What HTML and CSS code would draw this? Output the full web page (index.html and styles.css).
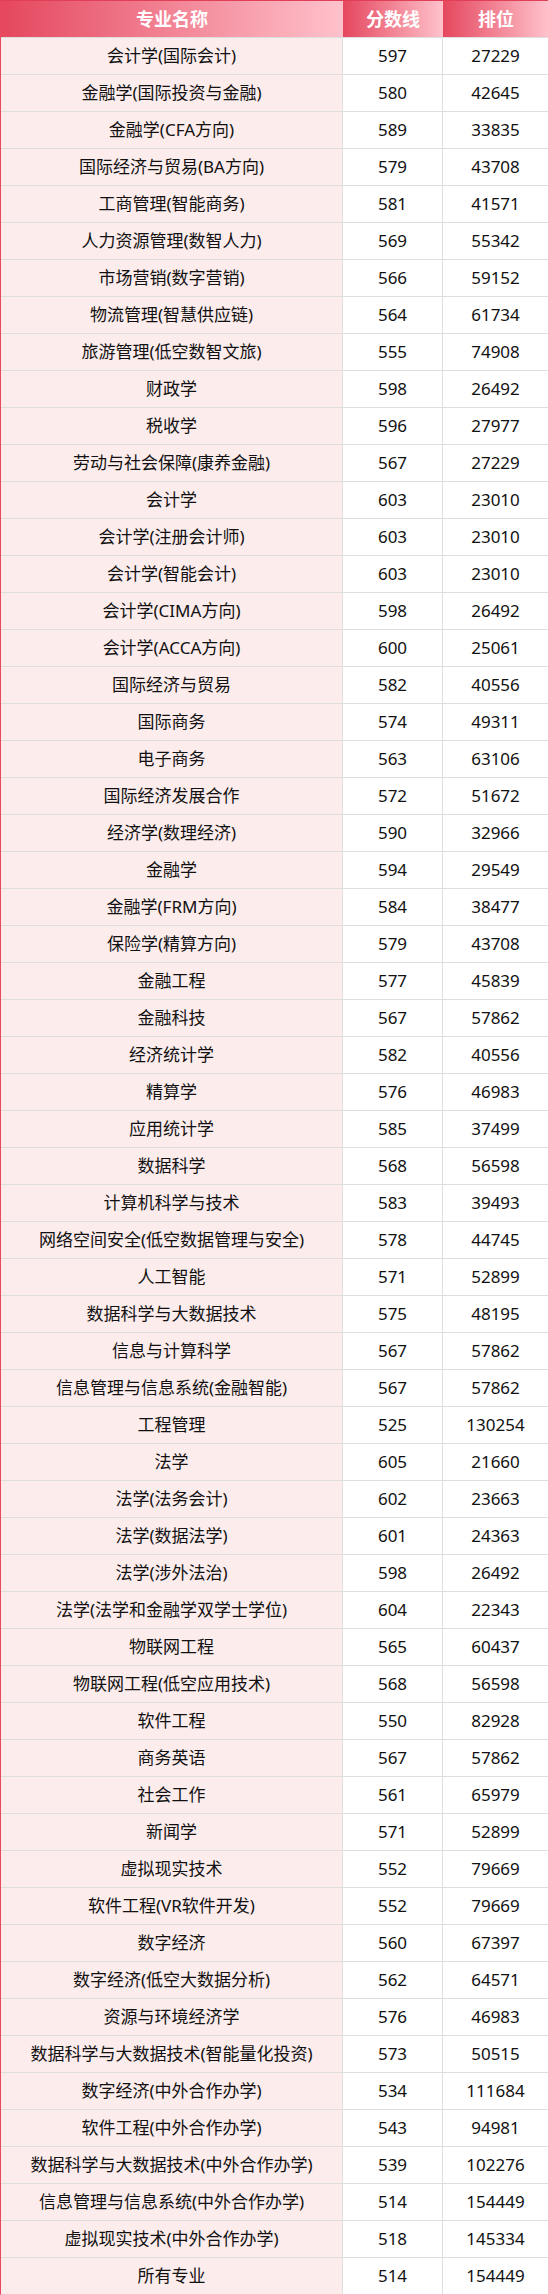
FILE: index.html
```html
<!DOCTYPE html>
<html lang="zh-CN">
<head>
<meta charset="utf-8">
<title>专业分数线</title>
<link rel="stylesheet" href="styles.css">
</head>
<body>
<table class="score-table">
<colgroup><col class="c-name"><col class="c-score"><col class="c-rank"></colgroup>
<thead>
<tr><th>专业名称</th><th>分数线</th><th>排位</th></tr>
</thead>
<tbody>
<tr><td>会计学(国际会计)</td><td>597</td><td>27229</td></tr>
<tr><td>金融学(国际投资与金融)</td><td>580</td><td>42645</td></tr>
<tr><td>金融学(CFA方向)</td><td>589</td><td>33835</td></tr>
<tr><td>国际经济与贸易(BA方向)</td><td>579</td><td>43708</td></tr>
<tr><td>工商管理(智能商务)</td><td>581</td><td>41571</td></tr>
<tr><td>人力资源管理(数智人力)</td><td>569</td><td>55342</td></tr>
<tr><td>市场营销(数字营销)</td><td>566</td><td>59152</td></tr>
<tr><td>物流管理(智慧供应链)</td><td>564</td><td>61734</td></tr>
<tr><td>旅游管理(低空数智文旅)</td><td>555</td><td>74908</td></tr>
<tr><td>财政学</td><td>598</td><td>26492</td></tr>
<tr><td>税收学</td><td>596</td><td>27977</td></tr>
<tr><td>劳动与社会保障(康养金融)</td><td>567</td><td>27229</td></tr>
<tr><td>会计学</td><td>603</td><td>23010</td></tr>
<tr><td>会计学(注册会计师)</td><td>603</td><td>23010</td></tr>
<tr><td>会计学(智能会计)</td><td>603</td><td>23010</td></tr>
<tr><td>会计学(CIMA方向)</td><td>598</td><td>26492</td></tr>
<tr><td>会计学(ACCA方向)</td><td>600</td><td>25061</td></tr>
<tr><td>国际经济与贸易</td><td>582</td><td>40556</td></tr>
<tr><td>国际商务</td><td>574</td><td>49311</td></tr>
<tr><td>电子商务</td><td>563</td><td>63106</td></tr>
<tr><td>国际经济发展合作</td><td>572</td><td>51672</td></tr>
<tr><td>经济学(数理经济)</td><td>590</td><td>32966</td></tr>
<tr><td>金融学</td><td>594</td><td>29549</td></tr>
<tr><td>金融学(FRM方向)</td><td>584</td><td>38477</td></tr>
<tr><td>保险学(精算方向)</td><td>579</td><td>43708</td></tr>
<tr><td>金融工程</td><td>577</td><td>45839</td></tr>
<tr><td>金融科技</td><td>567</td><td>57862</td></tr>
<tr><td>经济统计学</td><td>582</td><td>40556</td></tr>
<tr><td>精算学</td><td>576</td><td>46983</td></tr>
<tr><td>应用统计学</td><td>585</td><td>37499</td></tr>
<tr><td>数据科学</td><td>568</td><td>56598</td></tr>
<tr><td>计算机科学与技术</td><td>583</td><td>39493</td></tr>
<tr><td>网络空间安全(低空数据管理与安全)</td><td>578</td><td>44745</td></tr>
<tr><td>人工智能</td><td>571</td><td>52899</td></tr>
<tr><td>数据科学与大数据技术</td><td>575</td><td>48195</td></tr>
<tr><td>信息与计算科学</td><td>567</td><td>57862</td></tr>
<tr><td>信息管理与信息系统(金融智能)</td><td>567</td><td>57862</td></tr>
<tr><td>工程管理</td><td>525</td><td>130254</td></tr>
<tr><td>法学</td><td>605</td><td>21660</td></tr>
<tr><td>法学(法务会计)</td><td>602</td><td>23663</td></tr>
<tr><td>法学(数据法学)</td><td>601</td><td>24363</td></tr>
<tr><td>法学(涉外法治)</td><td>598</td><td>26492</td></tr>
<tr><td>法学(法学和金融学双学士学位)</td><td>604</td><td>22343</td></tr>
<tr><td>物联网工程</td><td>565</td><td>60437</td></tr>
<tr><td>物联网工程(低空应用技术)</td><td>568</td><td>56598</td></tr>
<tr><td>软件工程</td><td>550</td><td>82928</td></tr>
<tr><td>商务英语</td><td>567</td><td>57862</td></tr>
<tr><td>社会工作</td><td>561</td><td>65979</td></tr>
<tr><td>新闻学</td><td>571</td><td>52899</td></tr>
<tr><td>虚拟现实技术</td><td>552</td><td>79669</td></tr>
<tr><td>软件工程(VR软件开发)</td><td>552</td><td>79669</td></tr>
<tr><td>数字经济</td><td>560</td><td>67397</td></tr>
<tr><td>数字经济(低空大数据分析)</td><td>562</td><td>64571</td></tr>
<tr><td>资源与环境经济学</td><td>576</td><td>46983</td></tr>
<tr><td>数据科学与大数据技术(智能量化投资)</td><td>573</td><td>50515</td></tr>
<tr><td>数字经济(中外合作办学)</td><td>534</td><td>111684</td></tr>
<tr><td>软件工程(中外合作办学)</td><td>543</td><td>94981</td></tr>
<tr><td>数据科学与大数据技术(中外合作办学)</td><td>539</td><td>102276</td></tr>
<tr><td>信息管理与信息系统(中外合作办学)</td><td>514</td><td>154449</td></tr>
<tr><td>虚拟现实技术(中外合作办学)</td><td>518</td><td>145334</td></tr>
<tr><td>所有专业</td><td>514</td><td>154449</td></tr>
</tbody>
</table>
</body>
</html>
```

FILE: styles.css
```css
html, body {
  margin: 0;
  padding: 0;
  background: #ffffff;
}

.score-table {
  width: 548px;
  table-layout: fixed;
  border-collapse: separate;
  border-spacing: 0;
  font-family: "Noto Sans", "Noto Sans CJK SC", sans-serif;
  color: #111111;
  border-left: 1px solid #e8485f;
  border-bottom: 1px solid #ffc0cb;
}

.c-name { width: 342px; }
.c-score { width: 100px; }
.c-rank { width: 106px; }

.score-table th {
  height: 36px;
  padding: 0;
  font-size: 18px;
  font-weight: 700;
  color: #ffffff;
  text-align: center;
  vertical-align: middle;
  background: linear-gradient(to right, #e5475e, #ffc2cc);
  border-top: 1px solid #e03f57;
  line-height: 36px;
}

.score-table td {
  height: 36px;
  padding: 0;
  font-size: 17px;
  text-align: center;
  vertical-align: middle;
  line-height: 36px;
  border-top: 1px solid #dedede;
  border-right: 1px solid #dedede;
  background: #ffffff;
  white-space: nowrap;
}

.score-table td:first-child {
  background: #fcecec;
}

.score-table tbody tr:first-child td {
  border-top: none;
}

.score-table thead th {
  border-bottom: 1px solid #dedede;
}
```
